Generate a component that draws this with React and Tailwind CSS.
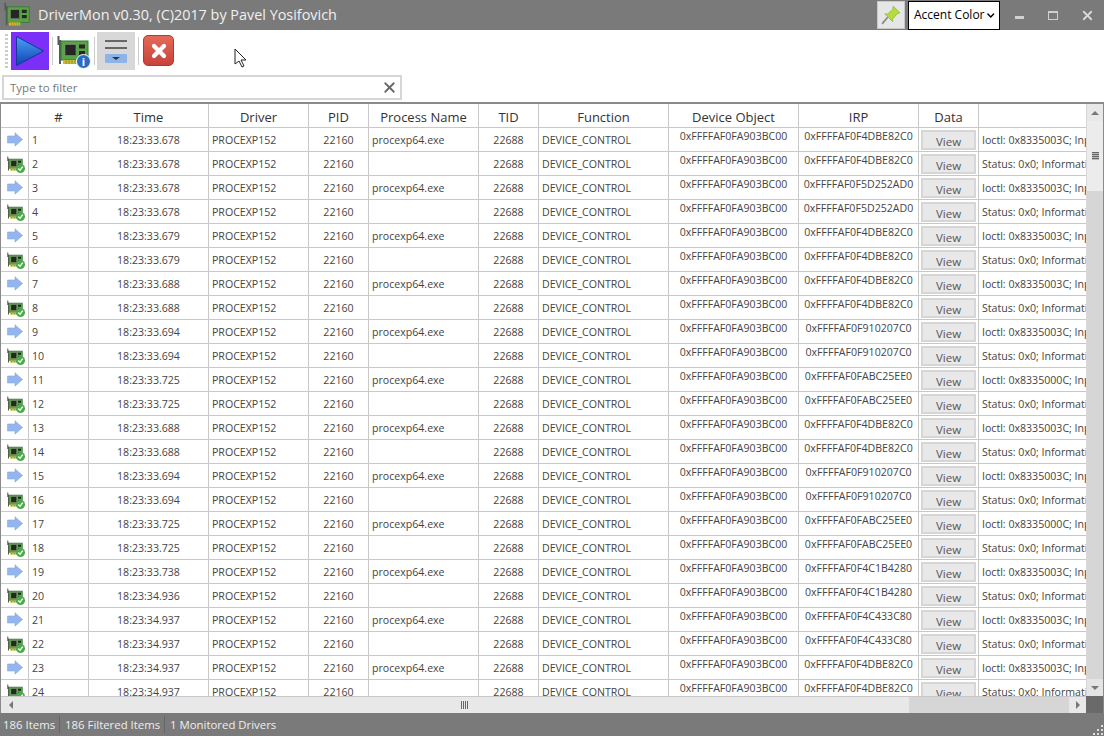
import { X, ChevronDown } from "lucide-react"

const base = [
  ["18:23:33.678", "0xFFFFAF0F4DBE82C0", "3"],
  ["18:23:33.678", "0xFFFFAF0F5D252AD0", "3"],
  ["18:23:33.679", "0xFFFFAF0F4DBE82C0", "3"],
  ["18:23:33.688", "0xFFFFAF0F4DBE82C0", "3"],
  ["18:23:33.694", "0xFFFFAF0F910207C0", "3"],
  ["18:23:33.725", "0xFFFFAF0FABC25EE0", "0"],
  ["18:23:33.688", "0xFFFFAF0F4DBE82C0", "3"],
  ["18:23:33.694", "0xFFFFAF0F910207C0", "3"],
  ["18:23:33.725", "0xFFFFAF0FABC25EE0", "0"],
  ["18:23:33.738", "0xFFFFAF0F4C1B4280", "3"],
  ["18:23:34.937", "0xFFFFAF0F4C433C80", "3"],
  ["18:23:34.937", "0xFFFFAF0F4DBE82C0", "3"],
]

const rows = base.flatMap((r, i) => [
  { n: i * 2 + 1, time: r[0], irp: r[1], info: `Ioctl: 0x833500${r[2]}C; Input`, proc: "procexp64.exe", kind: "in" },
  { n: i * 2 + 2, time: i === 9 ? "18:23:34.936" : r[0], irp: r[1], info: "Status: 0x0; Information", proc: "", kind: "out" },
])

function BoardIcon({ size = 16 }) {
  return (
    <svg width={size} height={size} viewBox="0 0 32 32">
      <path d="M1.5 1v9M3 5v24" stroke="#5a5a5a" strokeWidth="2" />
      <rect x="4" y="6" width="27" height="19" fill="#58a444" stroke="#2f7a30" />
      <rect x="8" y="9.5" width="11" height="11" fill="#262626" stroke="#8a8a8a" strokeWidth="0.6" />
      <rect x="22" y="9.5" width="6" height="4" fill="#262626" />
      <rect x="22" y="16" width="6" height="4" fill="#262626" />
      <path d="M6 25h14v4H6z" fill="#e3b62a" />
      <path d="M9 25v4M12 25v4M15 25v4M18 25v4" stroke="#58a444" />
    </svg>
  )
}

function InfoBoard() {
  return (
    <div className="relative w-8 h-8">
      <BoardIcon size={32} />
      <div className="absolute right-[-2px] bottom-[-2px] w-[15px] h-[15px] rounded-full bg-[#2a6cc4] border border-white text-white text-[11px] leading-[13px] text-center font-bold">i</div>
    </div>
  )
}

function CheckBoard() {
  return (
    <div className="relative w-4 h-4">
      <BoardIcon />
      <svg className="absolute right-[-2px] bottom-[-1px]" width="9" height="9" viewBox="0 0 10 10">
        <circle cx="5" cy="5" r="5" fill="#4bab4b" />
        <path d="M2.5 5l2 2 3-4" stroke="#fff" strokeWidth="1.5" fill="none" />
      </svg>
    </div>
  )
}

function ArrowIcon() {
  return (
    <svg width="16" height="15" viewBox="0 0 16 15">
      <path d="M0.5 4h7.5V0.8l7.5 6.7-7.5 6.7V11H0.5z" fill="#93b6ec" stroke="#86a8de" strokeWidth="0.6" />
    </svg>
  )
}

function Cell({ w, className = "", children }) {
  return <div className={`shrink-0 h-full border-r border-[#c8c8c8] overflow-hidden whitespace-nowrap ${w} ${className}`}>{children}</div>
}

function HeaderRow() {
  const cols = [
    ["w-[28px]", ""], ["w-[60px]", "#"], ["w-[120px]", "Time"], ["w-[100px]", "Driver"], ["w-[60px]", "PID"],
    ["w-[110px]", "Process Name"], ["w-[60px]", "TID"], ["w-[130px]", "Function"], ["w-[130px]", "Device Object"],
    ["w-[120px]", "IRP"], ["w-[60px]", "Data"],
  ]
  return (
    <div className="flex h-6 shrink-0 border-b border-[#c8c8c8] text-[13px] text-[#333]">
      {cols.map(([w, label], i) => (
        <Cell key={i} w={w} className="text-center leading-[27px]">{label}</Cell>
      ))}
    </div>
  )
}

function Row({ row }) {
  return (
    <div className="flex h-6 border-b border-[#c8c8c8] text-[10.6px] leading-6 text-[#444] shrink-0">
      <Cell w="w-[28px]" className="flex items-center justify-center">
        {row.kind === "in" ? <ArrowIcon /> : <CheckBoard />}
      </Cell>
      <Cell w="w-[60px]" className="pl-[3px]">{row.n}</Cell>
      <Cell w="w-[120px]" className="text-center">{row.time}</Cell>
      <Cell w="w-[100px]" className="pl-[3px]">PROCEXP152</Cell>
      <Cell w="w-[60px]" className="text-center">22160</Cell>
      <Cell w="w-[110px]" className="pl-[3px]">{row.proc}</Cell>
      <Cell w="w-[60px]" className="text-center">22688</Cell>
      <Cell w="w-[130px]" className="pl-[3px]">DEVICE_CONTROL</Cell>
      <Cell w="w-[130px]" className="text-center leading-4">0xFFFFAF0FA903BC00</Cell>
      <Cell w="w-[120px]" className="text-center leading-4">{row.irp}</Cell>
      <Cell w="w-[60px]" className="flex items-center justify-center">
        <div className="w-[55px] h-5 bg-[#e8e8e8] border-2 border-[#d6d6d6] text-center text-[11.5px] leading-[19px] text-[#555]">View</div>
      </Cell>
      <div className="flex-1 min-w-0 pl-[3px] overflow-hidden whitespace-nowrap">{row.info}</div>
    </div>
  )
}

function VScroll() {
  return (
    <div className="w-[17px] shrink-0 flex flex-col bg-[#e8e8e8] border-l border-[#d8d8d8]">
      <div className="h-[17px] shrink-0 flex items-center justify-center">
        <div className="w-0 h-0 border-x-[4px] border-x-transparent border-b-[4px] border-b-[#777]" />
      </div>
      <div className="h-[70px] shrink-0 bg-[#ececec] flex items-center justify-center">
        <div className="w-[7px] h-[8px] bg-[repeating-linear-gradient(#666_0,#666_1px,#bbb_1px,#bbb_2px)]" />
      </div>
      <div className="flex-1 bg-[#d6d6d6]" />
      <div className="h-[17px] shrink-0 bg-[#e4e4e4] flex items-center justify-center">
        <div className="w-0 h-0 border-x-[4px] border-x-transparent border-t-[4px] border-t-[#777]" />
      </div>
    </div>
  )
}

function HScroll() {
  return (
    <div className="flex h-[17px] shrink-0">
      <div className="flex-1 flex bg-[#d6d6d6] border-t border-[#c8c8c8]">
        <div className="w-[19px] bg-[#e8e8e8] flex items-center justify-center">
          <div className="w-0 h-0 border-y-[4px] border-y-transparent border-r-[4px] border-r-[#777]" />
        </div>
        <div className="w-[889px] bg-[#e8e8e8] flex items-center justify-center">
          <div className="h-2 w-[7px] bg-[repeating-linear-gradient(90deg,#666_0,#666_1px,#e8e8e8_1px,#e8e8e8_2px)]" />
        </div>
        <div className="flex-1" />
        <div className="w-[17px] bg-[#e8e8e8] flex items-center justify-center">
          <div className="w-0 h-0 border-y-[4px] border-y-transparent border-l-[4px] border-l-[#777]" />
        </div>
      </div>
      <div className="w-[17px] bg-[#6a6a6a]" />
    </div>
  )
}

export default function App() {
  return (
    <div className="w-[1104px] h-[736px] flex flex-col overflow-hidden bg-white font-['Open_Sans','Noto_Sans',sans-serif] relative">
      <div className="h-[30px] shrink-0 bg-[#7a7a7a] flex items-center pl-[4px] text-white">
        <BoardIcon size={26} />
        <div className="ml-[8px] text-[14.4px] text-[#f0f0f0] flex-1">DriverMon v0.30, (C)2017 by Pavel Yosifovich</div>
        <div className="w-[28px] h-[28px] mr-[3px] bg-[#e6e6e6] border border-[#c8c8c8] flex items-center justify-center">
          <svg width="20" height="20" viewBox="0 0 18 18">
            <path d="M1 17l5-6" stroke="#888" strokeWidth="1.5" />
            <path d="M11 1l6 6-2.5 1-4 4.5 0 2.5-7-7 2.5 0 4.5-4z" fill="#b4dc3c" stroke="#8ab02a" strokeWidth="0.6" />
          </svg>
        </div>
        <div className="w-[92px] h-[29px] bg-white border border-black flex items-center justify-between pl-[5px] pr-[3px] text-[12px] text-black whitespace-nowrap">
          Accent Color <ChevronDown size={13} strokeWidth={3} />
        </div>
        <div className="w-[104px] flex items-center pl-[15px]">
          <div className="w-[9px] h-[3px] mt-[4px] bg-[#d0d0d0]" />
          <div className="w-[10px] h-[9px] ml-[24px] border border-t-2 border-[#d0d0d0]" />
          <X className="ml-[22px]" size={15} strokeWidth={3} color="#d8d8d8" />
        </div>
      </div>

      <div className="h-[40px] shrink-0 flex items-end bg-white">
        <div className="w-[3px] h-[34px] ml-[5px] mr-[3px] mb-[2px] bg-[repeating-linear-gradient(#ccc_0,#ccc_2px,#fff_2px,#fff_4px)]" />
        <div className="w-[38px] h-[38px] bg-[#7b2ff7] flex items-center justify-center">
          <svg width="28" height="30" viewBox="0 0 28 30">
            <defs>
              <linearGradient id="play" x1="0" y1="0" x2="0" y2="1">
                <stop offset="0" stopColor="#4aa0f5" />
                <stop offset="1" stopColor="#1142b4" />
              </linearGradient>
            </defs>
            <path d="M0.5 0.5l27 14.5-27 14.5z" fill="url(#play)" stroke="#123a90" />
          </svg>
        </div>
        <div className="w-px h-7 mb-[5px] bg-[#ccc] ml-[3px] mr-[4px]" />
        <div className="mb-[3px]"><InfoBoard /></div>
        <div className="w-px h-7 mb-[5px] bg-[#ccc] ml-[5px] mr-[2px]" />
        <div className="w-[38px] h-[38px] bg-[#d8d8d8] flex flex-col items-center justify-center gap-[5px]">
          <div className="w-[22px] h-[2px] bg-[#666]" />
          <div className="w-[22px] h-[2px] bg-[#666]" />
          <div className="w-[22px] h-[9px] bg-[#8db4e8] rounded-[1px] flex items-center justify-center">
            <div className="w-0 h-0 border-x-[4px] border-x-transparent border-t-[3px] border-t-[#333]" />
          </div>
        </div>
        <div className="w-px h-7 mb-[5px] bg-[#ccc] ml-[3px] mr-[4px]" />
        <div className="w-[31px] h-[31px] mb-[4px] rounded-[5px] bg-[linear-gradient(#e46a58,#c9423a)] border border-[#b03a32] flex items-center justify-center">
          <X size={20} strokeWidth={5} color="#fff" />
        </div>
      </div>

      <div className="h-[32px] shrink-0 pl-[2px] pt-[5px] pr-[702px]">
        <div className="h-[25px] border-2 border-[#d6d6d6] flex items-center justify-between pl-[6px] pr-[2px] text-[11.5px] text-[#777]">
          Type to filter
          <X size={17} strokeWidth={2.5} color="#666" />
        </div>
      </div>

      <div className="flex-1 min-h-0 flex flex-col border-t-2 border-x border-[#8a8a8a]">
        <div className="flex-1 min-h-0 flex">
          <div className="flex-1 min-w-0 flex flex-col overflow-hidden">
            <HeaderRow />
            {rows.map((r) => <Row key={r.n} row={r} />)}
          </div>
          <VScroll />
        </div>
        <HScroll />
      </div>

      <div className="h-[23px] shrink-0 bg-[#7a7a7a] flex items-center text-[11.4px] text-[#eee]">
        <div className="w-[60px] pl-[3px] border-r border-[#666] whitespace-nowrap">186 Items</div>
        <div className="w-[105px] pl-[5px] border-r border-[#666] whitespace-nowrap">186 Filtered Items</div>
        <div className="pl-[5px] whitespace-nowrap">1 Monitored Drivers</div>
        <svg className="ml-auto self-end mb-[1px] mr-[1px]" width="11" height="11" viewBox="0 0 11 11">
          <path d="M9 1h2v2H9zM5 5h2v2H5zM9 5h2v2H9zM1 9h2v2H1zM5 9h2v2H5zM9 9h2v2H9z" fill="#ddd" />
        </svg>
      </div>

      <svg className="absolute left-[234px] top-[48px]" width="14" height="20" viewBox="0 0 14 20">
        <path d="M1 1v15l4-3 3 6 2-1-3-6h5z" fill="#fff" stroke="#222" />
      </svg>
    </div>
  )
}
